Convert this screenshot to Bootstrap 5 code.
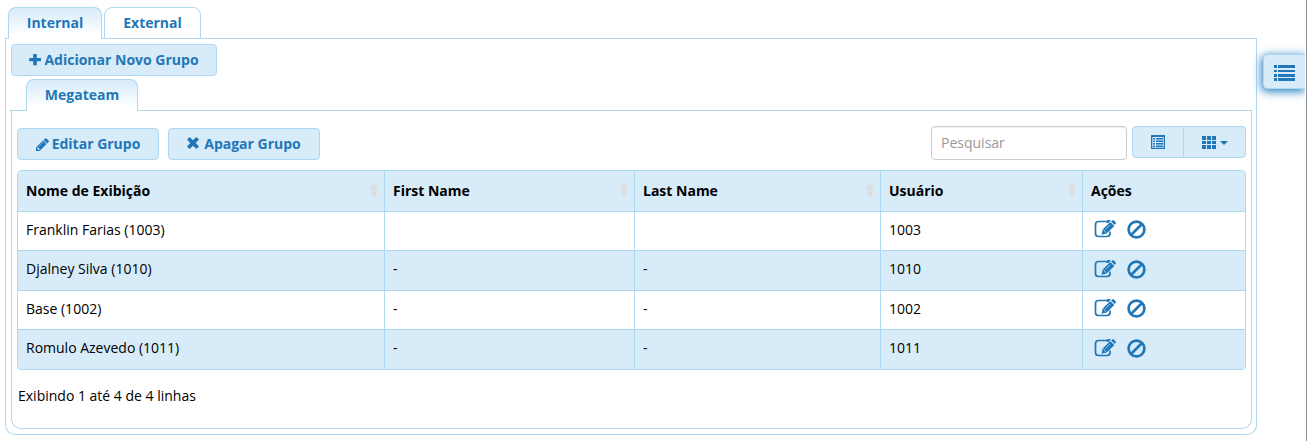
<!DOCTYPE html>
<html lang="pt-BR">
<head>
<meta charset="utf-8">
<meta name="viewport" content="width=device-width, initial-scale=1">
<title>Grupos</title>
<link href="https://cdn.jsdelivr.net/npm/bootstrap@5.3.0/dist/css/bootstrap.min.css" rel="stylesheet">
<style>
:root{--line:#aed7f1;--fill:#d7ebf9;--ink:#1f77b8}
body{font:14px/20px "Open Sans",sans-serif;color:#000;background:#fff;height:441px;overflow:hidden}
svg{display:block;fill:currentColor;flex:none}
.page{width:1307px;height:441px;border-right:1px solid #909090;padding-top:7px}
.workspace{width:1252px;margin-left:5px}
.nav-tabs{border-bottom:1px solid var(--line);gap:3px;flex-wrap:nowrap}
.nav-tabs .nav-link{height:32px;margin-bottom:-1px;padding:6px 0 0;border:1px solid var(--line);border-radius:8px 8px 0 0;color:var(--ink);font-weight:700;line-height:20px;text-align:center;white-space:nowrap}
.nav-tabs .nav-link.active{color:var(--ink);background:linear-gradient(#d7ebf9,#fff 90%);border-color:var(--line) var(--line) #fff}
.outer-tabs{padding-left:3px;gap:2px}
.nav-tabs .nav-link{padding-top:5px}
.outer-panel{height:396px;border:1px solid var(--line);border-top:0;border-radius:0 0 10px 10px;padding:5px 4px 0}
.inner-tabs{padding-left:16px;margin-top:3px}
.inner-tabs .nav-link{padding-top:5px}
.inner-panel{height:318px;margin-left:1px;border:1px solid var(--line);border-top:0;border-radius:0 0 10px 10px;padding:15px 5px 0}
.btn-soft{--bs-btn-color:var(--ink);--bs-btn-bg:var(--fill);--bs-btn-border-color:var(--line);--bs-btn-hover-bg:#c7e2f5;--bs-btn-hover-color:var(--ink);--bs-btn-hover-border-color:var(--line);--bs-btn-border-radius:4px;--bs-btn-font-size:14px;--bs-btn-font-weight:700;height:32px;padding:0;display:flex;align-items:center;justify-content:center;line-height:20px;white-space:nowrap;gap:3px}
.search{width:196px;height:34px;font-size:14px;line-height:20px;padding:5px 9px 7px;border:1px solid #ccc;border-radius:4px;box-shadow:inset 0 1px 1px rgba(0,0,0,.075);margin-right:5px}
.search::placeholder{color:#999}
.grid-frame{border:1px solid var(--line);border-radius:4px;overflow:hidden;margin-top:10px;width:1229px;height:200px}
.grid-frame .table{--bs-table-bg:transparent;--bs-table-color:#000;border-collapse:separate;border-spacing:0;table-layout:fixed;width:1227px;margin:0;color:#000}
.grid-frame th,.grid-frame td{padding:0 8px;border:0;border-left:1px solid var(--line);border-top:1px solid var(--line);vertical-align:middle;height:39.5px}
.grid-frame td{padding-bottom:2px}
.grid-frame tbody tr:last-child td{height:40.5px;padding-bottom:3px}
.grid-frame tr>:first-child{border-left:0}
.grid-frame th{border-top:0;height:39.7px;background:var(--fill)}
.grid-frame tbody tr:nth-child(even)>*{background:var(--fill)}
.grid-frame th svg{color:#ddd;margin-right:-2px}
.acts{gap:11px;color:var(--ink);padding-left:3px}
.side-toggle{position:absolute;left:1263px;top:54px;width:42px;height:35px;border-right:0;border-radius:5px 0 0 5px;box-shadow:-1px 2px 9px 1px #3388c4;clip-path:inset(-14px 0 -16px -14px)}
</style>
</head>
<body>
<svg width="0" height="0" class="position-absolute" aria-hidden="true">
<symbol id="edit" viewBox="0 0 22 18"><path d="M14 1.5H4.5q-3 0-3 3v9q0 3 3 3h8.500q3 0 3-3v-2" fill="none" stroke="currentColor" stroke-width="1.7"/><path d="M13.500 0h3.500l-2.500 3h-2z"/><path d="M7.500 14.700l1.200-5.200 7.600-7.500 4 4-7.600 7.500z"/><path d="M17 1.700L18.300.4q.8-.7 1.500 0l1.800 1.800q.7.700 0 1.500L20.400 5z"/><path d="M9.400 10l2.700 2.700M16.700 1.500l3.800 3.800" stroke="#fff" stroke-width=".7"/><path d="M11.500 9.600l4.800-4.800" stroke="#fff" stroke-width=".6"/></symbol>
<symbol id="ban" viewBox="0 0 19 19"><g fill="none" stroke="currentColor" stroke-width="2.7"><circle cx="9.500" cy="9.500" r="7.900"/><path d="M4 15L15 4"/></g></symbol>
<symbol id="sort" viewBox="0 0 8 15"><path d="M4 0l4 7H0zM0 8h8l-4 7z"/></symbol>
</svg>
<main class="page">
<div class="workspace">
<nav class="nav nav-tabs outer-tabs"><a class="nav-link active" style="width:94px" href="#">Internal</a><a class="nav-link" style="width:97px" href="#">External</a></nav>
<section class="outer-panel">
<button class="btn btn-soft" style="width:206px;margin-left:1px"><svg width="12" height="12" viewBox="0 0 12 12"><path d="M4.200 0h3.600v3.900H12v3.400H7.800v3.900H4.200V7.300H.2V3.900h4z"/></svg>Adicionar Novo Grupo</button>
<nav class="nav nav-tabs inner-tabs"><a class="nav-link active" style="width:112px" href="#">Megateam</a></nav>
<div class="inner-panel">
<div class="d-flex align-items-start">
<div class="d-flex gap-2" style="padding-top:2px"><button class="btn btn-soft" style="width:142px"><svg width="13" height="13" viewBox="128 128 1536 1536"><path d="M491 1536l91-91-235-235-91 91v107h128v128h107zm523-928q0-22-22-22-10 0-17 7l-542 542q-7 7-7 17 0 22 22 22 10 0 17-7l542-542q7-7 7-17zm-54-192l416 416-832 832h-416v-416zm683 96q0 53-37 90l-166 166-416-416 166-165q36-38 90-38 53 0 91 38l235 234q37 39 37 91z"/></svg>Editar Grupo</button><button class="btn btn-soft" style="width:152px;margin-left:1px;gap:5px"><svg width="12" height="12" viewBox="0 0 12 12" style="margin-top:-2px"><path d="M2.600 0L6 3.200 9.400 0 12 2.600 8.800 6 12 9.400 9.400 12 6 8.800 2.600 12 0 9.400 3.200 6 0 2.600z"/></svg>Apagar Grupo</button></div>
<input class="form-control search ms-auto" placeholder="Pesquisar" aria-label="Pesquisar">
<div class="btn-group"><button class="btn btn-soft" style="width:52px" aria-label="Alternar"><svg width="14" height="14" viewBox="0 0 14 14"><path fill-rule="evenodd" d="M0 0h14v14H0zM1.300 2v10.700h11.400V2z"/><path d="M2.200 3h1.800v1.400H2.200zM5 3h7v1.400H5zM2.200 5.500h1.800v1.400H2.200zM5 5.500h7v1.400H5zM2.200 8h1.800v1.400H2.200zM5 8h7v1.400H5zM2.200 10.500h1.800v1.400H2.200zM5 10.500h7v1.400H5z"/></svg></button><button class="btn btn-soft" style="width:63px;gap:4px" aria-label="Colunas"><svg width="14" height="13" viewBox="0 0 14 13"><path d="M0 0h4v4H0zm5 0h4v4H5zm5 0h4v4h-4zM0 5h4v3H0zm5 0h4v3H5zm5 0h4v3h-4zM0 9h4v4H0zm5 0h4v4H5zm5 0h4v4h-4z"/></svg><svg width="8" height="4" viewBox="0 0 8 4" style="margin-top:2px"><path d="M0 0h8L4 4z"/></svg></button></div>
</div>
<div class="grid-frame">
<table class="table">
<colgroup><col style="width:366px"><col style="width:250px"><col style="width:246px"><col style="width:202px"><col style="width:163px"></colgroup>
<thead><tr>
<th><div class="d-flex justify-content-between align-items-center">Nome de Exibição<svg width="8" height="15"><use href="#sort"/></svg></div></th>
<th><div class="d-flex justify-content-between align-items-center">First Name<svg width="8" height="15"><use href="#sort"/></svg></div></th>
<th><div class="d-flex justify-content-between align-items-center">Last Name<svg width="8" height="15"><use href="#sort"/></svg></div></th>
<th><div class="d-flex justify-content-between align-items-center">Usuário<svg width="8" height="15"><use href="#sort"/></svg></div></th>
<th>Ações</th></tr></thead>
<tbody>
<tr><td>Franklin Farias (1003)</td><td></td><td></td><td>1003</td><td><div class="d-flex acts"><svg width="22" height="18"><use href="#edit"/></svg><svg width="19" height="19"><use href="#ban"/></svg></div></td></tr>
<tr><td>Djalney Silva (1010)</td><td>-</td><td>-</td><td>1010</td><td><div class="d-flex acts"><svg width="22" height="18"><use href="#edit"/></svg><svg width="19" height="19"><use href="#ban"/></svg></div></td></tr>
<tr><td>Base (1002)</td><td>-</td><td>-</td><td>1002</td><td><div class="d-flex acts"><svg width="22" height="18"><use href="#edit"/></svg><svg width="19" height="19"><use href="#ban"/></svg></div></td></tr>
<tr><td>Romulo Azevedo (1011)</td><td>-</td><td>-</td><td>1011</td><td><div class="d-flex acts"><svg width="22" height="18"><use href="#edit"/></svg><svg width="19" height="19"><use href="#ban"/></svg></div></td></tr>
</tbody>
</table>
</div>
<div style="margin-top:16px;padding-left:1px">Exibindo 1 até 4 de 4 linhas</div>
</div>
</section>
</div>
<button class="btn btn-soft side-toggle" aria-label="Menu"><svg width="21" height="16" viewBox="0 0 21 16" style="margin-top:3px"><path d="M0 0h3v3H0zM4 0h17v3H4zM0 5h3v2H0zM4 5h17v2H4zM0 9h3v3H0zM4 9h17v3H4zM0 13h3v3H0zM4 13h17v3H4z"/></svg></button>
</main>
<script src="https://cdn.jsdelivr.net/npm/bootstrap@5.3.0/dist/js/bootstrap.bundle.min.js"></script>
</body>
</html>
